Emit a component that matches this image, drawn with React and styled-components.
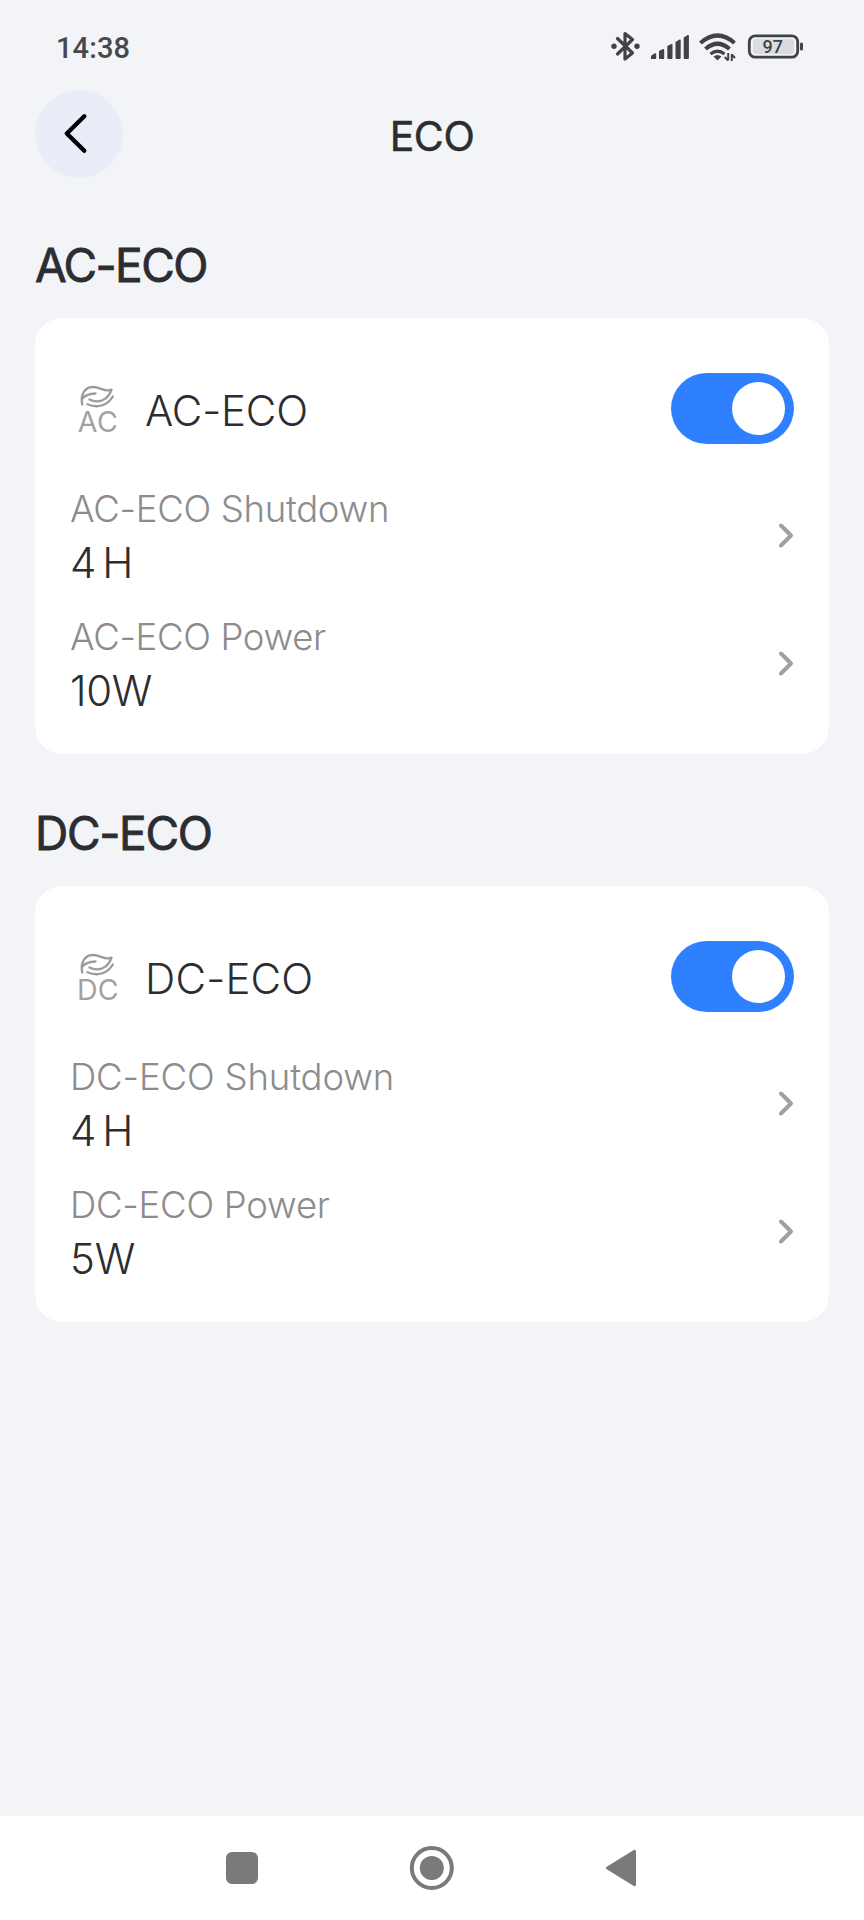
import { useState } from 'react';
import styled, { createGlobalStyle } from 'styled-components';

const GlobalStyle = createGlobalStyle`
  * {
    box-sizing: border-box;
  }

  body {
    margin: 0;
    background: #f2f4f8;
    font-family: Inter, 'Liberation Sans', sans-serif;
    color: #2c2d31;
  }
`;

const Screen = styled.div`
  display: flex;
  flex-direction: column;
  width: 864px;
  height: 1920px;
  background: #f2f4f8;
`;

const StatusBar = styled.div`
  display: flex;
  align-items: center;
  justify-content: space-between;
  height: 90px;
  padding: 4px 60px 0 56px;
`;

const Clock = styled.span`
  padding-top: 1px;
  font-family: Roboto, 'Liberation Sans', sans-serif;
  font-size: 29px;
  font-weight: 500;
  line-height: 40px;
  letter-spacing: 0.1px;
  color: #48494d;
`;

const Header = styled.header`
  display: grid;
  grid-template-columns: 88px 1fr 88px;
  align-items: center;
  height: 88px;
  padding: 0 35px;
`;

const BackButton = styled.button`
  display: flex;
  width: 88px;
  height: 88px;
  padding: 0;
  border: none;
  border-radius: 50%;
  background: #e9edf7;
  cursor: pointer;
`;

const PageTitle = styled.h1`
  margin: 0;
  padding-top: 3px;
  font-size: 41px;
  font-weight: 400;
  line-height: 48px;
  letter-spacing: -0.4px;
  text-align: center;
  -webkit-text-stroke: 0.5px currentColor;
`;

const Content = styled.main`
  display: flex;
  flex: 1;
  flex-direction: column;
  gap: 51px;
  padding: 59px 35px 0;
`;

const SectionTitle = styled.h2`
  height: 56px;
  margin: 0 0 25px;
  font-size: 46px;
  font-weight: 400;
  line-height: 56px;
  letter-spacing: ${({ $spacing }) => $spacing}px;
  -webkit-text-stroke: 0.8px currentColor;
`;

const Card = styled.div`
  height: 436px;
  padding: 27px 35px;
  border-radius: 27px;
  background: #fff;
`;

const CardHead = styled.div`
  display: flex;
  align-items: center;
  height: 126px;
`;

const HeadLabel = styled.span`
  flex: 1;
  padding: 6px 0 0 21px;
  font-size: 42px;
  font-weight: 300;
  line-height: 50px;
  letter-spacing: ${({ $spacing }) => $spacing}px;
`;

const Toggle = styled.button`
  display: flex;
  justify-content: ${({ $on }) => ($on ? 'flex-end' : 'flex-start')};
  width: 123.5px;
  height: 71px;
  margin-top: 1px;
  padding: 9px;
  border: none;
  border-radius: 36px;
  background: ${({ $on }) => ($on ? '#2f80ff' : '#c9ccd4')};
  cursor: pointer;
`;

const Knob = styled.span`
  width: 53px;
  height: 53px;
  border-radius: 50%;
  background: #fff;
`;

const SettingRow = styled.div`
  display: flex;
  align-items: center;
  justify-content: space-between;
  height: 128px;
`;

const SettingText = styled.div`
  display: flex;
  flex-direction: column;
  padding-top: 2px;
`;

const SettingLabel = styled.span`
  height: 53px;
  font-size: 36.5px;
  font-weight: 300;
  line-height: 53px;
  letter-spacing: ${({ $spacing }) => $spacing}px;
  color: #8c8c8d;
`;

const SettingValue = styled.span`
  height: 53px;
  font-size: 42px;
  font-weight: 300;
  line-height: 53px;
  letter-spacing: ${({ $spacing }) => $spacing}px;
  word-spacing: -4px;
`;

const NavBar = styled.nav`
  display: flex;
  align-items: center;
  justify-content: center;
  gap: 142px;
  height: 104px;
  background: #fff;
`;

const EcoBadge = styled.div`
  display: flex;
  flex-direction: column;
  align-items: center;
  width: 54px;
  height: 56px;
`;

const BadgeText = styled.span`
  height: 28px;
  padding-left: 2px;
  font-size: 28.5px;
  font-weight: 400;
  line-height: 28px;
  letter-spacing: 0.4px;
  color: #a2a2a2;
`;

const StatusIcons = () => (
  <svg width="196" height="40" viewBox="608 27 196 40" fill="none">
    {/* bluetooth */}
    <path
      d="M617.5 38.5 L632.5 53 L625 59 V33.5 L632.5 39.5 L617.5 54"
      stroke="#414246"
      strokeWidth="3.2"
      strokeLinejoin="round"
      strokeLinecap="round"
    />
    <circle cx="614" cy="46.3" r="2.7" fill="#414246" />
    <circle cx="637" cy="46.3" r="2.7" fill="#414246" />
    {/* signal */}
    <g fill="#414246">
      <path d="M651 59 v-2.5 q0-1 1-1.6 l3-1.6 q1.2-.5 1.2 .8 v3.9 q0 1-1 1z" />
      <path d="M659 58 v-7 l4-2 q1.2-.3 1.2 .8 v8.2 q0 1-1 1 h-3.2 q-1 0-1-1z" />
      <path d="M667.3 58 v-12 l4-2 q1.2-.3 1.2 .8 v13.2 q0 1-1 1 h-3.2 q-1 0-1-1z" />
      <path d="M675.5 58 v-16 l4-2.5 q1.2-.3 1.2 .8 v17.7 q0 1-1 1 h-3.2 q-1 0-1-1z" />
      <path d="M683.7 58 v-20.5 l4-2.5 q1.2-.3 1.2 .8 v22.2 q0 1-1 1 h-3.2 q-1 0-1-1z" />
    </g>
    {/* wifi */}
    <g stroke="#414246" strokeWidth="4.2">
      <path d="M700.5 43 Q717.5 28 734.5 43" />
      <path d="M705.5 49 Q717.5 38.5 729.5 49" />
      <path d="M710.5 54 Q717.5 48.5 724.5 54" strokeWidth="3.4" />
    </g>
    <path d="M713.5 56.5 Q717.5 53.5 721.5 56.5 L717.5 60.5z" fill="#414246" />
    <path d="M728.2 53 V60.5 M728.2 60.5 L724.7 57 M731.8 61 V54 M731.8 54.5 L735 58" stroke="#414246" strokeWidth="2" />
    {/* battery */}
    <rect x="749.3" y="35.8" width="48.4" height="21.4" rx="6" stroke="#414246" strokeWidth="2.8" />
    <rect x="753" y="39" width="41" height="15" rx="2.5" fill="#dbdce0" />
    <rect x="800" y="42.5" width="3" height="8" rx="1.5" fill="#414246" />
    <text
      x="772.8"
      y="53.3"
      textAnchor="middle"
      fontFamily="Roboto, sans-serif"
      fontSize="18"
      fontWeight="500"
      fill="#414246"
    >
      97
    </text>
  </svg>
);

const EcoIcon = ({ label }) => (
  <EcoBadge>
    <svg width="54" height="28" viewBox="70 380.5 54 28" fill="none">
      <g stroke="#9c9c9c" strokeWidth="2.3" strokeLinecap="round" strokeLinejoin="round">
        <path d="M82.2 405 C80 394.5 85 387.4 93.5 387.5 C101 387.6 104 393 111.5 390.2 C109 398 103 402.5 96 401.8 Q92 401.3 89.5 400" />
        <path d="M82.2 399.5 C84.5 395.8 89 394.2 95.5 394" />
        <path d="M87.5 404.8 C98 409.3 108 405.5 112.8 397" />
      </g>
    </svg>
    <BadgeText>{label}</BadgeText>
  </EcoBadge>
);

const Chevron = () => (
  <svg width="20" height="30" viewBox="0 0 20 30" fill="none">
    <path
      d="M7 5.5 L17 15.5 L7 25.5"
      stroke="#a0a0a0"
      strokeWidth="4"
      strokeLinecap="round"
      strokeLinejoin="round"
    />
  </svg>
);

const sections = [
  {
    name: 'AC-ECO',
    icon: 'AC',
    titleSpacing: -1.6,
    headSpacing: -0.2,
    rows: [
      { label: 'AC-ECO Shutdown', value: '4 H', labelSpacing: -0.3, valueSpacing: -1 },
      { label: 'AC-ECO Power', value: '10W', labelSpacing: -0.35, valueSpacing: -0.4 },
    ],
  },
  {
    name: 'DC-ECO',
    icon: 'DC',
    titleSpacing: -1.3,
    headSpacing: 0.2,
    rows: [
      { label: 'DC-ECO Shutdown', value: '4 H', labelSpacing: -0.15, valueSpacing: -1 },
      { label: 'DC-ECO Power', value: '5W', labelSpacing: -0.25, valueSpacing: -0.2 },
    ],
  },
];

const EcoSection = ({ section }) => {
  const [enabled, setEnabled] = useState(true);

  return (
    <section>
      <SectionTitle $spacing={section.titleSpacing}>{section.name}</SectionTitle>
      <Card>
        <CardHead>
          <EcoIcon label={section.icon} />
          <HeadLabel $spacing={section.headSpacing}>{section.name}</HeadLabel>
          <Toggle $on={enabled} onClick={() => setEnabled(!enabled)}>
            <Knob />
          </Toggle>
        </CardHead>
        {section.rows.map((row) => (
          <SettingRow key={row.label}>
            <SettingText>
              <SettingLabel $spacing={row.labelSpacing}>{row.label}</SettingLabel>
              <SettingValue $spacing={row.valueSpacing}>{row.value}</SettingValue>
            </SettingText>
            <Chevron />
          </SettingRow>
        ))}
      </Card>
    </section>
  );
};

const App = () => (
  <>
    <GlobalStyle />
    <Screen>
      <StatusBar>
        <Clock>14:38</Clock>
        <StatusIcons />
      </StatusBar>
      <Header>
        <BackButton>
          <svg width="88" height="88" viewBox="35 90 88 88" fill="none">
            <path
              d="M84.3 116.3 L66.8 133.5 L84.3 150.8"
              stroke="#000"
              strokeWidth="4.4"
              strokeLinecap="round"
              strokeLinejoin="round"
            />
          </svg>
        </BackButton>
        <PageTitle>ECO</PageTitle>
      </Header>
      <Content>
        {sections.map((section) => (
          <EcoSection key={section.name} section={section} />
        ))}
      </Content>
      <NavBar>
        <svg width="48" height="48" viewBox="218 1844 48 48">
          <rect x="226" y="1852" width="32" height="32" rx="6" fill="#7a7a7a" />
        </svg>
        <svg width="48" height="48" viewBox="408 1844 48 48">
          <circle cx="431.8" cy="1868" r="20" fill="none" stroke="#7a7a7a" strokeWidth="4" />
          <circle cx="431.8" cy="1868" r="12" fill="#7a7a7a" />
        </svg>
        <svg width="48" height="48" viewBox="598 1844 48 48">
          <path
            d="M607.5 1868 L634.5 1851.3 V1884.7z"
            fill="#7a7a7a"
            stroke="#7a7a7a"
            strokeWidth="3"
            strokeLinejoin="round"
          />
        </svg>
      </NavBar>
    </Screen>
  </>
);

export default App;
